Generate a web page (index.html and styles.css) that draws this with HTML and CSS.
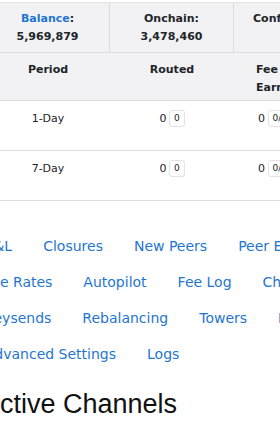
FILE: index.html
```html
<!DOCTYPE html>
<html lang="en">
<head>
    <meta charset="UTF-8">
    <title>Dashboard</title>
    <link rel="stylesheet" href="styles.css">
</head>
<body>
    <div id="summary" class="tbl">
        <div class="cell">
            <div><span class="blue">Balance</span>:</div>
            <div>5,969,879</div>
        </div>
        <div class="cell">
            <div>Onchain:</div>
            <div>3,478,460</div>
        </div>
        <div class="cell side">
            <div>Confirmed:</div>
        </div>
    </div>

    <div id="stats">
        <div class="row head">
            <div class="cell">Period</div>
            <div class="cell">Routed</div>
            <div class="cell side">Fee<br>Earned</div>
        </div>
        <div class="row">
            <div class="cell">1-Day</div>
            <div class="cell">0 <span class="badge">0</span></div>
            <div class="cell side">0 <span class="badge">0/0</span></div>
        </div>
        <div class="row">
            <div class="cell">7-Day</div>
            <div class="cell">0 <span class="badge">0</span></div>
            <div class="cell side">0 <span class="badge">0/0</span></div>
        </div>
    </div>

    <div id="nav">
        <div class="line l1"><a href="#">P&amp;L</a><a href="#">Closures</a><a href="#">New Peers</a><a href="#">Peer Events</a></div>
        <div class="line l2"><a href="#">Fee Rates</a><a href="#">Autopilot</a><a href="#">Fee Log</a><a href="#">Channels</a></div>
        <div class="line l3"><a href="#">Keysends</a><a href="#">Rebalancing</a><a href="#">Towers</a><a href="#">Batch</a></div>
        <div class="line l4"><a href="#">Advanced Settings</a><a href="#">Logs</a></div>
    </div>

    <h2 class="title">Active Channels</h2>
</body>
</html>
```

FILE: styles.css
```css
*{margin:0;padding:0;}
html,body{overflow:hidden;}
body{
    font-family:"DejaVu Sans",sans-serif;
    font-size:11px;
    color:#212529;
    background:#fff;
    width:280px;
}
.blue{color:#1f76cf;}

.tbl,.row{
    display:grid;
    grid-template-columns:124px 124px 124px;
    margin-left:-14px;
    width:372px;
}
#summary{
    margin-top:2px;
    border-top:1px solid #e4e4e7;
    border-bottom:1px solid #dcdde0;
    background:#f2f2f4;
    font-weight:bold;
    line-height:18px;
}
#summary .cell{
    height:49px;
    padding-top:7px;
    box-sizing:border-box;
    text-align:center;
    border-right:1px solid #dcdde0;
}
#summary .cell.side{
    text-align:left;
    padding-left:19px;
    border-right:none;
}

#stats .row{
    border-bottom:1px solid #dcdde0;
    line-height:18px;
}
#stats .row .cell{
    height:49px;
    box-sizing:border-box;
    padding-top:9px;
    text-align:center;
}
#stats .row.head{
    background:#f2f2f4;
    font-weight:bold;
}
#stats .row.head .cell{
    height:47px;
    padding-top:8px;
}
#stats .cell.side{
    text-align:left;
    padding-left:24px;
}
#stats .row.head .cell.side{
    padding-left:22px;
}
.badge{
    display:inline-block;
    font-size:9px;
    line-height:15px;
    padding:0 4px;
    border:1px solid #e3e3e6;
    border-radius:3px;
    vertical-align:1px;
    margin-left:-1px;
}

#nav{
    padding-top:27px;
    font-size:14px;
    line-height:36px;
    white-space:nowrap;
}
#nav .line{
    display:flex;
    gap:31px;
}
#nav a{
    color:#1f76cf;
    text-decoration:none;
}
.l1{margin-left:-15px;}
.l2{margin-left:-16px;}
.l3{margin-left:-15px;}
.l4{margin-left:-15px;}

.title{
    margin-top:16px;
    margin-left:-18px;
    font-family:"Liberation Sans",Arial,sans-serif;
    font-weight:normal;
    font-size:27px;
    line-height:32px;
    color:#111;
    white-space:nowrap;
}
```
